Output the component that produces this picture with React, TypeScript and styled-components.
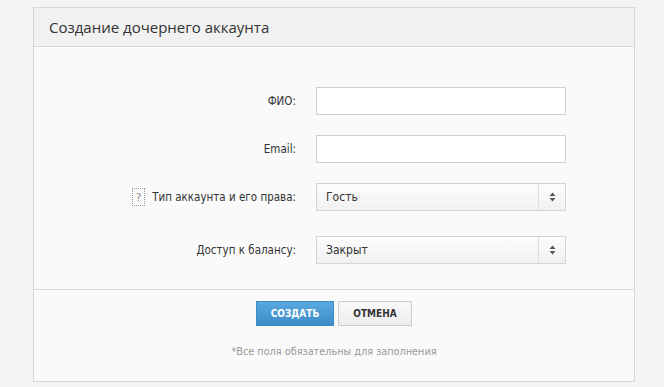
import React from "react";
import styled, { createGlobalStyle } from "styled-components";

const GlobalStyle = createGlobalStyle`
  html, body {
    margin: 0;
    padding: 0;
    background: #f4f4f4;
    font-family: "DejaVu Sans Condensed", "DejaVu Sans", sans-serif;
  }
`;

type Field = {
  label: string;
  help?: boolean;
  kind: "text" | "select";
  value?: string;
};

const fields: Field[] = [
  { label: "ФИО:", kind: "text" },
  { label: "Email:", kind: "text" },
  { label: "Тип аккаунта и его права:", kind: "select", value: "Гость", help: true },
  { label: "Доступ к балансу:", kind: "select", value: "Закрыт" },
];

export default function App() {
  return (
    <>
      <GlobalStyle />
      <Page>
        <Panel>
          <Header>Создание дочернего аккаунта</Header>
          <Body>
            {fields.map((f, i) => (
              <Row key={f.label} $wide={i === 3}>
                <Label>
                  {f.help && <Help>?</Help>}
                  {f.label}
                </Label>
                {f.kind === "text" ? (
                  <Input type="text" />
                ) : (
                  <Select>
                    <SelectValue>{f.value}</SelectValue>
                    <SelectArrow>
                      <svg width="7" height="10" viewBox="0 0 7 10">
                        <path d="M3.5 0.5L6.5 4H0.5Z" fill="#555" />
                        <path d="M3.5 9.5L6.5 6H0.5Z" fill="#555" />
                      </svg>
                    </SelectArrow>
                  </Select>
                )}
              </Row>
            ))}
          </Body>
          <Footer>
            <Buttons>
              <PrimaryButton>Создать</PrimaryButton>
              <Button>Отмена</Button>
            </Buttons>
            <Note>*Все поля обязательны для заполнения</Note>
          </Footer>
        </Panel>
      </Page>
    </>
  );
}

const Page = styled.div`
  padding: 7px 29px 0 33px;
`;

const Panel = styled.div`
  width: 600px;
  border: 1px solid #d6d6d6;
  border-bottom: none;
  background: #fafafa;
`;

const Header = styled.div`
  height: 38px;
  line-height: 38px;
  padding-left: 15px;
  background: #f1f1f1;
  border-bottom: 1px solid #d6d6d6;
  font-family: "Open Sans", sans-serif;
  font-size: 15px;
  color: #333;
`;

const Body = styled.div`
  padding: 40px 0 25px;
  border-bottom: 1px solid #dadada;
`;

const Row = styled.div<{ $wide?: boolean }>`
  display: grid;
  grid-template-columns: 262px 250px;
  column-gap: 20px;
  align-items: center;
  margin-top: ${(p) => (p.$wide ? "25px" : "20px")};

  &:first-child {
    margin-top: 0;
  }
`;

const Label = styled.label`
  display: flex;
  justify-content: flex-end;
  align-items: center;
  font-size: 11.5px;
  color: #333;
`;

const Help = styled.span`
  display: inline-flex;
  align-items: center;
  justify-content: center;
  width: 11px;
  height: 16px;
  margin-right: 7px;
  border: 1px dotted #999;
  font-size: 11px;
  color: #888;
`;

const Input = styled.input`
  box-sizing: border-box;
  width: 250px;
  height: 28px;
  margin: 0;
  border: 1px solid #cfcfcf;
  background: #fff;
  outline: none;
`;

const Select = styled.div`
  box-sizing: border-box;
  display: flex;
  width: 250px;
  height: 28px;
  border: 1px solid #d4d4d4;
  background: linear-gradient(#fcfcfc, #f1f1f1);
`;

const SelectValue = styled.div`
  flex: 1;
  display: flex;
  align-items: center;
  padding-left: 9px;
  font-size: 12px;
  color: #333;
`;

const SelectArrow = styled.div`
  width: 26px;
  display: flex;
  align-items: center;
  justify-content: center;
  border-left: 1px solid #dcdcdc;
`;

const Footer = styled.div`
  height: 92px;
  padding-top: 11px;
  box-sizing: border-box;
  border-bottom: 1px solid #d6d6d6;
`;

const Buttons = styled.div`
  display: flex;
  justify-content: center;
  gap: 4px;
`;

const Button = styled.button`
  box-sizing: border-box;
  height: 25px;
  width: 74px;
  padding: 0;
  border: 1px solid #cccccc;
  background: linear-gradient(#f9f9f9, #ececec);
  font-family: "DejaVu Sans Condensed", "DejaVu Sans", sans-serif;
  font-size: 10px;
  font-weight: bold;
  text-transform: uppercase;
  color: #333;
  cursor: pointer;
`;

const PrimaryButton = styled(Button)`
  width: 78px;
  border: 1px solid #3d8bc6;
  background: linear-gradient(#5ba8df, #3d8cc8);
  color: #fff;
`;

const Note = styled.div`
  margin-top: 19px;
  text-align: center;
  font-size: 10.8px;
  color: #999;
`;
